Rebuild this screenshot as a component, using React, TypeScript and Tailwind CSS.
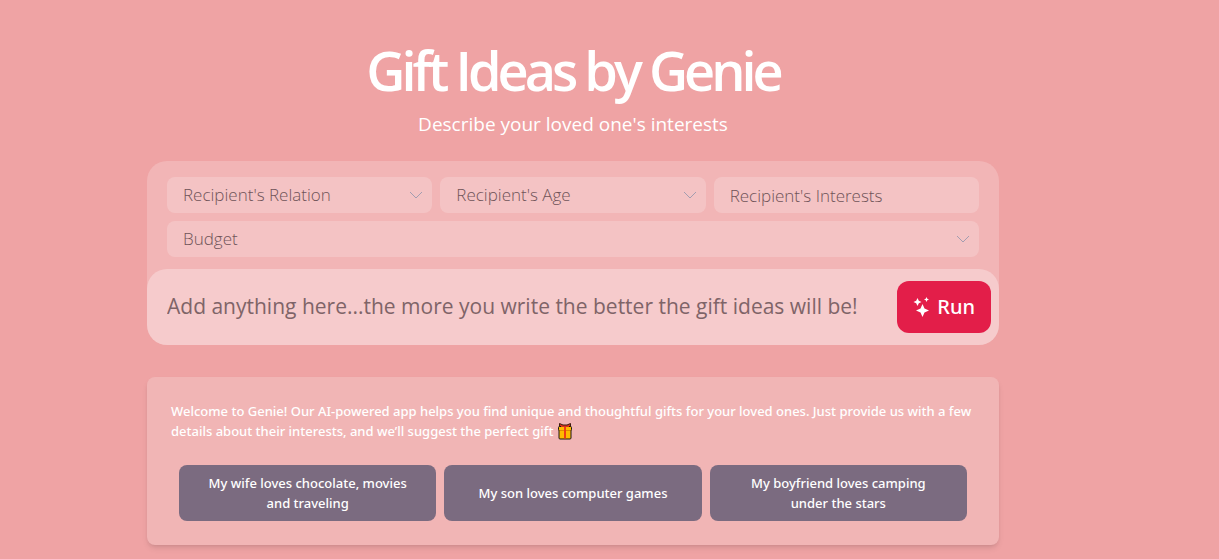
import { useState } from 'react'

const relations = ['Wife', 'Husband', 'Girlfriend', 'Boyfriend', 'Son', 'Daughter', 'Friend']
const ages = ['0-12', '13-17', '18-29', '30-49', '50+']
const budgets = ['Under $25', '$25 - $50', '$50 - $100', 'Over $100']

const examples = [
  'My wife loves chocolate, movies and traveling',
  'My son loves computer games',
  'My boyfriend loves camping under the stars',
]

interface SelectFieldProps {
  label: string
  options: string[]
}

function SelectField({ label, options }: SelectFieldProps) {
  return (
    <div className="relative">
      <select
        aria-label={label}
        defaultValue=""
        className="block h-9 w-full appearance-none rounded-lg bg-white/20 pl-4 pr-9 text-[17px] font-light text-[#6f5358] outline-none"
      >
        <option value="">{label}</option>
        {options.map((option) => (
          <option key={option}>{option}</option>
        ))}
      </select>
      <svg
        viewBox="0 0 16 16"
        className="pointer-events-none absolute right-2 top-3 h-4 w-4 text-[#a39db0]"
        fill="none"
        stroke="currentColor"
        aria-hidden="true"
      >
        <path d="M2 3l6 6 6-6" />
      </svg>
    </div>
  )
}

function SparkleIcon() {
  return (
    <svg viewBox="0 0 16 20" className="h-5 w-4" fill="currentColor" aria-hidden="true">
      <path d="M9.500 7l2 4.500L16 13.500l-4.500 2L9.500 20l-2-4.500L3 13.500l4.500-2z" />
      <path d="M4.500 1l1.300 2.700L8.500 5 5.800 6.300 4.500 9 3.200 6.300.5 5l2.700-1.300z" />
      <path d="M13.500 0l.8 1.700 1.700.8-1.700.8-.8 1.700-.8-1.700-1.700-.8 1.700-.8z" />
    </svg>
  )
}

function GiftIcon() {
  return (
    <svg viewBox="0 0 16 18" className="inline-block h-[18px] w-4 align-[-4px]" role="img" aria-label="gift">
      <path d="M2.500 1.500L6 3h4l3.500-1.500V5h-11z" fill="#d8321c" stroke="#3a1a12" strokeLinejoin="round" />
      <rect x="2" y="7" width="12" height="10" rx="1" fill="#ffb900" stroke="#1c1714" />
      <rect x="1.500" y="4.500" width="13" height="4" rx="1" fill="#ffb900" stroke="#1c1714" />
      <path d="M2.500 8.500h11" stroke="#e08a00" />
      <path d="M4 4.500h8" stroke="#d8321c" />
      <rect x="7" y="5" width="2" height="11.500" fill="#f03a17" />
    </svg>
  )
}

export default function App() {
  const [prompt, setPrompt] = useState('')

  return (
    <div className="min-h-screen bg-[#efa3a4] pb-3.5 pl-4 pr-[89px] pt-[38px] font-['Open_Sans',sans-serif] text-white">
      <main className="mx-auto max-w-[852px]">
        <h1 className="text-center text-[54px] font-semibold leading-[64px] tracking-[-4px]">
          Gift Ideas by Genie
        </h1>
        <p className="mt-2 text-center text-[19px] leading-7">Describe your loved one's interests</p>

        {/* Prompt form */}
        <form className="mt-[23px] rounded-[20px] bg-white/20" onSubmit={(e) => e.preventDefault()}>
          <div className="grid grid-cols-3 gap-2 px-5 pb-3 pt-4">
            <SelectField label="Recipient's Relation" options={relations} />
            <SelectField label="Recipient's Age" options={ages} />
            <input
              type="text"
              aria-label="Recipient's Interests"
              placeholder="Recipient's Interests"
              className="h-9 w-full rounded-lg bg-white/20 px-4 text-[17px] font-light text-[#6f5358] outline-none placeholder:text-[#6f5358]"
            />
            <div className="col-span-3">
              <SelectField label="Budget" options={budgets} />
            </div>
          </div>
          <div className="flex items-center rounded-[20px] bg-white/30 py-3 pl-5 pr-2">
            <input
              type="text"
              aria-label="Gift details"
              value={prompt}
              onChange={(e) => setPrompt(e.target.value)}
              placeholder="Add anything here...the more you write the better the gift ideas will be!"
              className="min-w-0 flex-1 bg-transparent text-[21px] text-[#7f6468] outline-none placeholder:text-[#7f6468]"
            />
            <button
              type="submit"
              className="flex h-[52px] items-center gap-2 rounded-xl bg-[#e31e49] px-4 font-['Noto_Sans',sans-serif] text-xl font-medium"
            >
              <SparkleIcon />
              Run
            </button>
          </div>
        </form>

        {/* Welcome card */}
        <section className="mt-8 rounded-lg bg-[#f1b5b5] p-6 font-['Noto_Sans',sans-serif] shadow-md">
          <p className="text-[13px] font-medium leading-5">
            Welcome to Genie! Our AI-powered app helps you find unique and thoughtful gifts for your loved ones. Just
            provide us with a few details about their interests, and we’ll suggest the perfect gift <GiftIcon />
          </p>
          <div className="mt-6 grid grid-cols-3 gap-2 px-2">
            {examples.map((example) => (
              <button
                key={example}
                type="button"
                onClick={() => setPrompt(example)}
                className="min-h-14 rounded-lg bg-[#7b6b80] px-6 py-2 text-[13px] font-medium leading-5"
              >
                {example}
              </button>
            ))}
          </div>
        </section>
      </main>
    </div>
  )
}
